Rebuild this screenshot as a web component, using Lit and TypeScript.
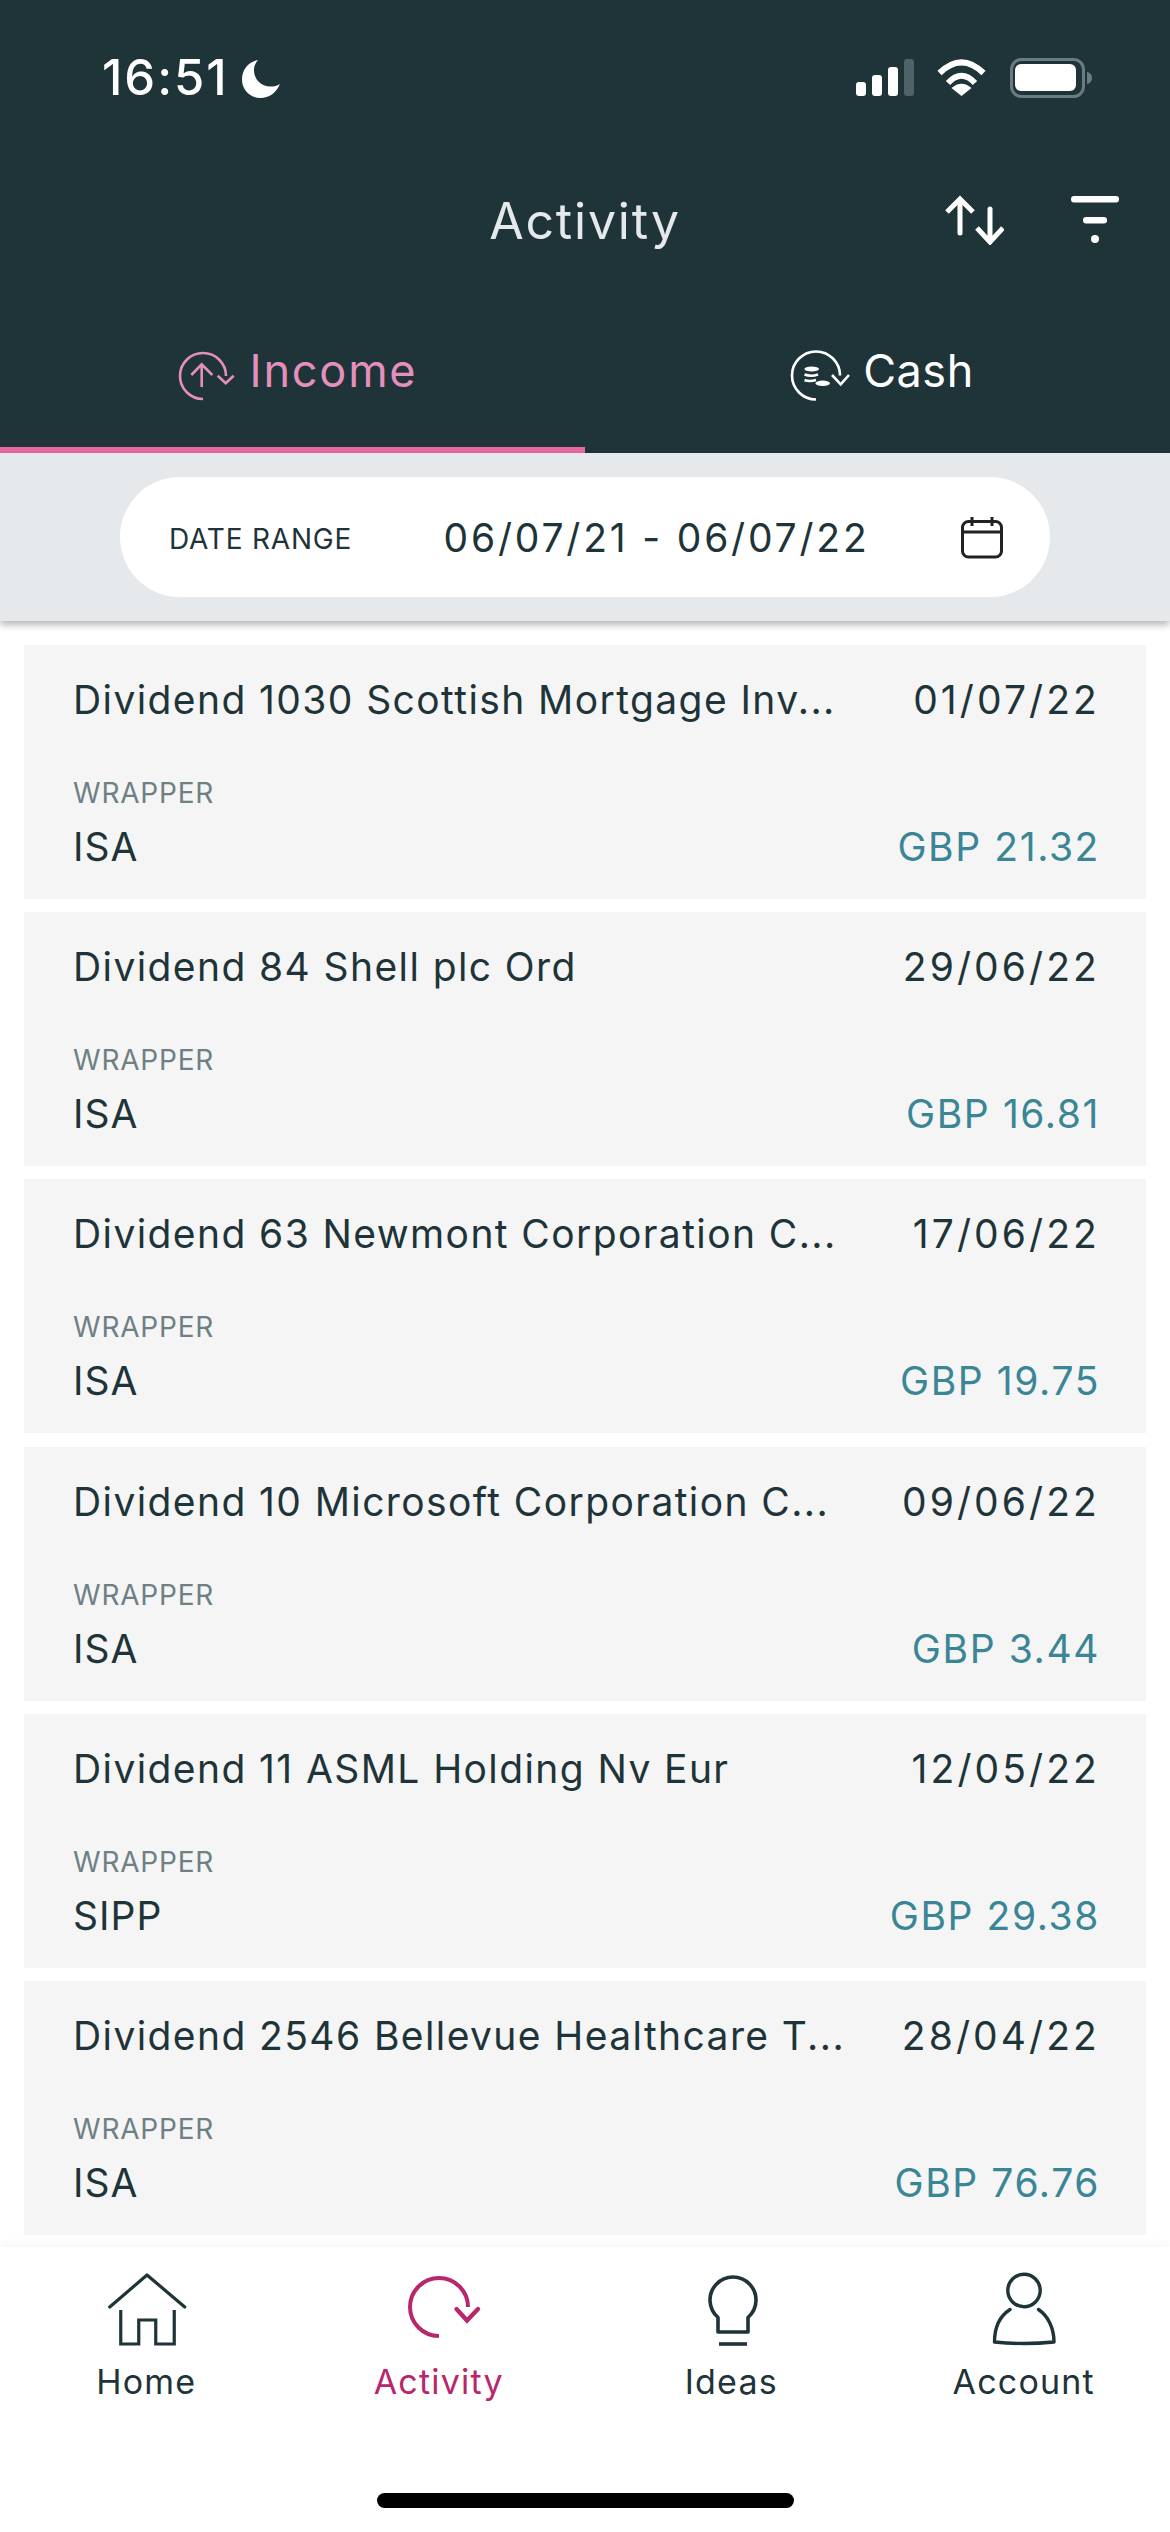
import { LitElement, html, css, svg } from 'lit';
import { customElement } from 'lit/decorators.js';

interface Row {
  title: string;
  date: string;
  wrapper: string;
  amount: string;
}

const rows: Row[] = [
  { title: 'Dividend 1030 Scottish Mortgage Inv...', date: '01/07/22', wrapper: 'ISA', amount: 'GBP 21.32' },
  { title: 'Dividend 84 Shell plc Ord', date: '29/06/22', wrapper: 'ISA', amount: 'GBP 16.81' },
  { title: 'Dividend 63 Newmont Corporation C...', date: '17/06/22', wrapper: 'ISA', amount: 'GBP 19.75' },
  { title: 'Dividend 10 Microsoft Corporation C...', date: '09/06/22', wrapper: 'ISA', amount: 'GBP 3.44' },
  { title: 'Dividend 11 ASML Holding Nv Eur', date: '12/05/22', wrapper: 'SIPP', amount: 'GBP 29.38' },
  { title: 'Dividend 2546 Bellevue Healthcare T...', date: '28/04/22', wrapper: 'ISA', amount: 'GBP 76.76' },
];

const navIcons = {
  home: svg`<path d="M3.75 39 41 7l37.75 32" stroke-width="3.2" stroke-linecap="round" stroke-linejoin="round"/>
    <path d="M14.75 42v34h18V52h17v24h18.5V42" stroke-width="3.2"/>`,
  activity: svg`<path d="M69 39A29 29 0 1 0 40 68" stroke-width="4"/>
    <path d="M57.5 41 68 52.5 79 41" stroke-width="4.4" stroke-linecap="round"/>`,
  ideas: svg`<path d="M27 64V49.5A23 23 0 1 1 57 49.5V64Z" stroke-width="3.6" stroke-linejoin="round"/>
    <path d="M28 76h28" stroke-width="3.6"/>`,
  account: svg`<circle cx="40" cy="22.5" r="16.2" stroke-width="3.4"/>
    <path d="M26 41.5C16 48 10.5 60 10.5 74Q40 77 70 74C70 60 64 48 54.5 41.5" stroke-width="3.4" stroke-linecap="round" stroke-linejoin="round"/>`,
};

const navItems = [
  { label: 'Home', icon: navIcons.home, active: false },
  { label: 'Activity', icon: navIcons.activity, active: true },
  { label: 'Ideas', icon: navIcons.ideas, active: false },
  { label: 'Account', icon: navIcons.account, active: false },
];

@customElement('app-root')
export class AppRoot extends LitElement {
  static styles = css`
    :host {
      display: flex;
      flex-direction: column;
      width: 1170px;
      height: 2532px;
      overflow: hidden;
      background: #fff;
      color: #1e3439;
      font-family: Inter, 'Noto Sans', sans-serif;
    }

    /* header */
    .header {
      background: #1e3439;
      flex: none;
    }

    .status {
      display: flex;
      justify-content: space-between;
      height: 170px;
      box-sizing: border-box;
      padding: 56px 78px 0 102px;
    }

    .clock {
      display: flex;
      gap: 12px;
      height: 44px;
      align-items: flex-start;
      color: #fff;
      font-size: 49px;
      font-weight: 500;
      line-height: 44px;
      letter-spacing: 2px;
    }

    .moon {
      width: 40px;
      height: 40px;
      margin-top: 3px;
    }

    .title-row {
      display: grid;
      grid-template-columns: 1fr auto 1fr;
      align-items: center;
      height: 100px;
    }

    .title {
      grid-column: 2;
      margin-top: 2px;
      font-size: 50px;
      color: #e6e9ec;
      letter-spacing: 1.8px;
    }

    .actions {
      display: flex;
      justify-content: flex-end;
      gap: 67px;
      padding-right: 51px;
    }

    .tabs {
      display: flex;
      padding-top: 30px;
    }

    .tab {
      flex: none;
      width: 585px;
      height: 153px;
      box-sizing: border-box;
      display: flex;
      align-items: center;
      justify-content: center;
      gap: 14px;
      padding-bottom: 6px;
      color: #fff;
      font-size: 45px;
      letter-spacing: 0.5px;
      border-bottom: 6px solid transparent;
    }

    .tab.cash {
      gap: 12px;
      padding-left: 8px;
    }

    .tab.active {
      padding-left: 8px;
      color: #e58fbd;
      letter-spacing: 1.8px;
      border-bottom-color: #e56aa0;
    }

    .tab svg {
      flex: none;
      margin-top: 10px;
    }

    /* date filter */
    .filter {
      position: relative;
      flex: none;
      box-sizing: border-box;
      height: 168px;
      padding: 24px 120px 0;
      background: #e6e9ec;
      box-shadow: 0 4px 7px rgba(0, 0, 0, 0.28);
    }

    .pill {
      display: flex;
      align-items: center;
      justify-content: space-between;
      height: 120px;
      box-sizing: border-box;
      padding: 0 47px 0 49px;
      border-radius: 60px;
      background: #fff;
    }

    .pill svg {
      margin-top: 2px;
    }

    .pill-label {
      margin-top: 4px;
      font-size: 28px;
      letter-spacing: 0.8px;
    }

    .pill-date {
      font-size: 39px;
      letter-spacing: 2.8px;
    }

    /* list */
    .list {
      flex: 1;
      min-height: 0;
      overflow: hidden;
      display: flex;
      flex-direction: column;
      gap: 13.2px;
      padding: 24px 24px 0;
    }

    .card {
      flex: none;
      height: 254px;
      box-sizing: border-box;
      padding: 31px 46px 29px 49px;
      display: flex;
      flex-direction: column;
      justify-content: space-between;
      background: #f5f5f5;
    }

    .line {
      display: flex;
      justify-content: space-between;
      align-items: flex-end;
      font-size: 39px;
      letter-spacing: 1.4px;
      white-space: nowrap;
    }

    .date {
      letter-spacing: 3.1px;
    }

    .wrapper-label {
      font-size: 28px;
      letter-spacing: 0.8px;
      color: #6f8085;
      margin-bottom: 13px;
    }

    .wrapper-value {
      letter-spacing: 1px;
    }

    .amount {
      color: #3a8596;
      letter-spacing: 1.6px;
    }

    /* bottom nav */
    .nav {
      position: relative;
      flex: none;
      height: 285px;
      box-sizing: border-box;
      padding: 21px 0 24px;
      display: flex;
      flex-direction: column;
      justify-content: space-between;
      background: #fff;
      box-shadow: 0 -4px 8px rgba(0, 0, 0, 0.035);
    }

    .nav-items {
      display: grid;
      grid-template-columns: repeat(4, 1fr);
    }

    .nav-item {
      display: flex;
      flex-direction: column;
      align-items: center;
      gap: 13px;
      font-size: 34px;
      letter-spacing: 1.2px;
    }

    .nav-item.active {
      color: #b8266c;
    }

    .nav-item svg {
      overflow: visible;
      fill: none;
      stroke: currentColor;
    }

    .home-bar {
      align-self: center;
      width: 417px;
      height: 15px;
      border-radius: 8px;
      background: #000;
    }
  `;

  renderStatus() {
    return html`
      <div class="status">
        <div class="clock">
          <span>16:51</span>
          <svg class="moon" viewBox="0 0 40 40" fill="#fff">
            <path d="M17 1C7 3 1 11 1 20.5 1 31 9 39 19.5 39 28 39 35 34 39 25 36 27 33 27.5 29.5 27.5 20 27.5 13 20.5 13 11 13 7 14.5 4 17 1Z" />
          </svg>
        </div>
        <svg width="236" height="44" viewBox="0 0 236 44">
          <rect x="0" y="26" width="10" height="14" rx="3" fill="#fff" />
          <rect x="16" y="19" width="10" height="21" rx="3" fill="#fff" />
          <rect x="32" y="11" width="10" height="29" rx="3" fill="#fff" />
          <rect x="48" y="3" width="10" height="37" rx="3" fill="#4e6267" />
          <g fill="none" stroke="#fff" stroke-width="6">
            <path d="M83.5 17Q105.5-4.4 127.5 17" />
            <path d="M92 27Q105.5 12.5 119 27" />
          </g>
          <path d="M105.5 40 95.5 32Q105.5 23.5 115.5 32Z" fill="#fff" />
          <rect x="155.500" y="3.500" width="72" height="37" rx="10" fill="none" stroke="#6a7c80" stroke-width="3" />
          <rect x="159" y="8" width="61" height="27" rx="6" fill="#fff" />
          <path d="M231 16c3 .5 5 3 5 6s-2 5.500-5 6Z" fill="#6a7c80" />
        </svg>
      </div>
    `;
  }

  renderTitle() {
    return html`
      <div class="title-row">
        <div class="title">Activity</div>
        <div class="actions">
          <svg width="60" height="50" viewBox="0 0 60 50" fill="none" stroke="#fff" stroke-width="5" stroke-linecap="round">
            <path d="M16 6V38" />
            <path d="M3 17 16 4 29 17" stroke-linecap="butt" />
            <path d="M46 14V46" />
            <path d="M33 33 46 47 59 33" stroke-linecap="butt" />
          </svg>
          <svg width="48" height="50" viewBox="0 0 48 50" fill="#fff">
            <rect x="0" y="1" width="48" height="6.500" rx="3" />
            <rect x="12" y="22" width="24" height="6.500" rx="3" />
            <circle cx="24" cy="44" r="4" />
          </svg>
        </div>
      </div>
    `;
  }

  renderTabs() {
    return html`
      <div class="tabs">
        <div class="tab active">
          <svg width="60" height="52" viewBox="0 0 60 52" fill="none" stroke="currentColor" stroke-width="2.600">
            <path d="M50 26A23 23 0 1 0 27 49" />
            <path d="M25.700 14V37" />
            <path d="M15.300 25 25.700 14.300 36.300 25" />
            <path d="M41.700 25.700 49.700 33.300 57.700 25.700" />
          </svg>
          <span>Income</span>
        </div>
        <div class="tab cash">
          <svg width="62" height="54" viewBox="0 0 62 54" fill="none" stroke="currentColor" stroke-width="2.600">
            <path d="M51 26.500A24 24 0 1 0 27 50.500" />
            <path d="M43 26 51.700 35.300 60 26" />
            <ellipse cx="22.700" cy="20" rx="7.300" ry="2.600" fill="#fff" stroke="none" />
            <path d="M15.500 25.500Q22 28 29 25.500M15.500 31Q20 33 27 31" />
            <ellipse cx="33.700" cy="34.300" rx="7.300" ry="2.700" fill="#fff" stroke="none" />
          </svg>
          <span>Cash</span>
        </div>
      </div>
    `;
  }

  renderFilter() {
    return html`
      <div class="filter">
        <div class="pill">
          <span class="pill-label">DATE RANGE</span>
          <span class="pill-date">06/07/21 - 06/07/22</span>
          <svg width="42" height="42" viewBox="0 0 42 42" fill="none" stroke="#222" stroke-width="3">
            <rect x="1.500" y="4.500" width="39" height="35.500" rx="6" />
            <path d="M1.500 15H40.500M11 0V9M31 0V9" />
          </svg>
        </div>
      </div>
    `;
  }

  render() {
    return html`
      <div class="header">
        ${this.renderStatus()} ${this.renderTitle()} ${this.renderTabs()}
      </div>
      ${this.renderFilter()}
      <div class="list">
        ${rows.map(
          (r) => html`
            <div class="card">
              <div class="line">
                <span>${r.title}</span>
                <span class="date">${r.date}</span>
              </div>
              <div class="line">
                <div>
                  <div class="wrapper-label">WRAPPER</div>
                  <div class="wrapper-value">${r.wrapper}</div>
                </div>
                <span class="amount">${r.amount}</span>
              </div>
            </div>
          `,
        )}
      </div>
      <div class="nav">
        <div class="nav-items">
          ${navItems.map(
            (n) => html`
              <div class="nav-item ${n.active ? 'active' : ''}">
                <svg width="80" height="80" viewBox="0 0 80 80">${n.icon}</svg>
                <span>${n.label}</span>
              </div>
            `,
          )}
        </div>
        <div class="home-bar"></div>
      </div>
    `;
  }
}
